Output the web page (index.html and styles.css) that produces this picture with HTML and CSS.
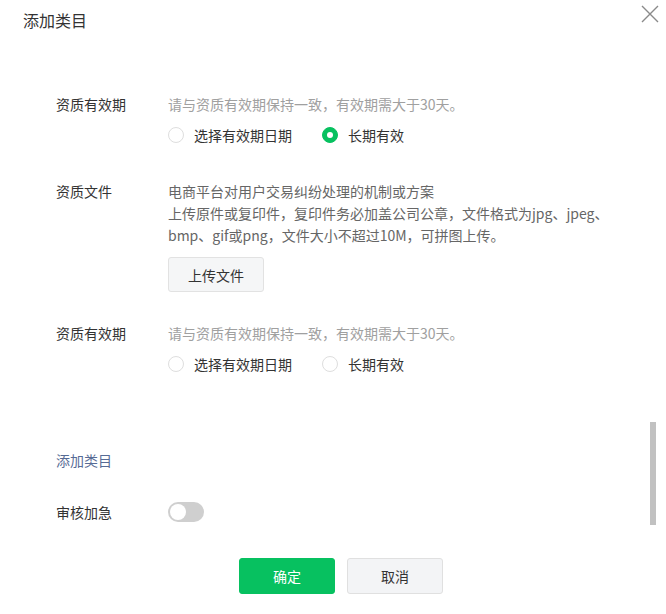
FILE: index.html
```html
<!DOCTYPE html>
<html lang="zh-CN">
<head>
<meta charset="utf-8">
<title>添加类目</title>
<link rel="stylesheet" href="styles.css">
</head>
<body>
<div class="dialog">
  <div class="header">
    <h1 class="title">添加类目</h1>
    <button class="close" aria-label="关闭">
      <svg width="18" height="18" viewBox="0 0 18 18"><path d="M1 1 L17 17 M17 1 L1 17" stroke="#8a8a8a" stroke-width="1.4" fill="none"/></svg>
    </button>
  </div>

  <div class="body">
    <div class="row row-first">
      <div class="label">资质有效期</div>
      <div class="field">
        <div class="hint">请与资质有效期保持一致，有效期需大于30天。</div>
        <div class="radios">
          <label class="radio"><span class="dot"></span>选择有效期日期</label>
          <label class="radio"><span class="dot checked"></span>长期有效</label>
        </div>
      </div>
    </div>

    <div class="row row-file">
      <div class="label">资质文件</div>
      <div class="field">
        <div class="desc">电商平台对用户交易纠纷处理的机制或方案</div>
        <div class="desc">上传原件或复印件，复印件务必加盖公司公章，文件格式为jpg、jpeg、bmp、gif或png，文件大小不超过10M，可拼图上传。</div>
        <button class="btn upload">上传文件</button>
      </div>
    </div>

    <div class="row row-third">
      <div class="label">资质有效期</div>
      <div class="field">
        <div class="hint">请与资质有效期保持一致，有效期需大于30天。</div>
        <div class="radios">
          <label class="radio"><span class="dot"></span>选择有效期日期</label>
          <label class="radio"><span class="dot"></span>长期有效</label>
        </div>
      </div>
    </div>

    <a class="add-link" href="#">添加类目</a>

    <div class="row row-urgent">
      <div class="label">审核加急</div>
      <div class="field">
        <span class="switch"><span class="knob"></span></span>
      </div>
    </div>
  </div>

  <div class="footer">
    <button class="btn primary">确定</button>
    <button class="btn default">取消</button>
  </div>

  <div class="scroll-thumb"></div>
</div>
</body>
</html>
```
FILE: styles.css
```css
* { box-sizing: border-box; }
html, body { margin: 0; padding: 0; background: #fff; }
body {
  font-family: "Noto Sans CJK SC", "Microsoft YaHei", sans-serif;
  font-size: 14px;
  color: #333;
  width: 666px;
  height: 614px;
  overflow: hidden;
}
.dialog { position: relative; width: 666px; height: 614px; }

.header {
  display: flex;
  justify-content: space-between;
  align-items: flex-start;
  padding: 8px 7px 0 23px;
}
.title {
  margin: 0;
  font-size: 16px;
  font-weight: normal;
  line-height: 24px;
  color: #333;
}
.close {
  border: 0;
  background: none;
  padding: 0;
  margin-top: -3px;
  width: 18px;
  height: 18px;
  cursor: pointer;
}
.close svg { display: block; }

.body { padding-left: 56px; }

.row {
  display: grid;
  grid-template-columns: 112px 1fr;
  line-height: 22px;
}
.row-first { margin-top: 61px; }
.row-file { margin-top: 34px; }
.row-third { margin-top: 30px; }
.row-urgent { margin-top: 30px; align-items: center; }

.label { color: #333; }
.hint { color: #a0a0a0; }
.desc { color: #666; width: 450px; }

.radios {
  display: flex;
  gap: 30px;
  margin-top: 9px;
}
.radio {
  display: flex;
  align-items: center;
  gap: 10px;
  color: #333;
}
.dot {
  width: 16px;
  height: 16px;
  border-radius: 50%;
  border: 1px solid #dedede;
  background: #fff;
  position: relative;
}
.dot.checked {
  background: #07c160;
  border-color: #07c160;
}
.dot.checked::after {
  content: "";
  position: absolute;
  left: 50%;
  top: 50%;
  width: 6px;
  height: 6px;
  margin: -3px 0 0 -3px;
  border-radius: 50%;
  background: #fff;
}

.btn {
  font-family: inherit;
  font-size: 14px;
  border-radius: 3px;
  cursor: pointer;
}
.upload {
  display: block;
  margin-top: 11px;
  width: 96px;
  height: 35px;
  background: #f5f6f7;
  border: 1px solid #e2e2e2;
  color: #333;
}

.add-link {
  display: block;
  margin-top: 74px;
  line-height: 22px;
  color: #576b95;
  text-decoration: none;
}

.switch {
  display: block;
  width: 36px;
  height: 20px;
  border-radius: 10px;
  background: #cfcfcf;
  position: relative;
}
.knob {
  position: absolute;
  left: 2px;
  top: 2px;
  width: 16px;
  height: 16px;
  border-radius: 50%;
  background: #fff;
}

.footer {
  display: flex;
  justify-content: center;
  gap: 12px;
  padding-left: 16px;
  margin-top: 35px;
}
.primary {
  width: 96px;
  height: 36px;
  background: #07c160;
  border: 1px solid #07c160;
  color: #fff;
}
.default {
  width: 96px;
  height: 36px;
  background: #f3f4f6;
  border: 1px solid #e0e0e0;
  color: #333;
}

.scroll-thumb {
  position: absolute;
  left: 650px;
  top: 422px;
  width: 6px;
  height: 103px;
  background: #c1c1c1;
}
```
